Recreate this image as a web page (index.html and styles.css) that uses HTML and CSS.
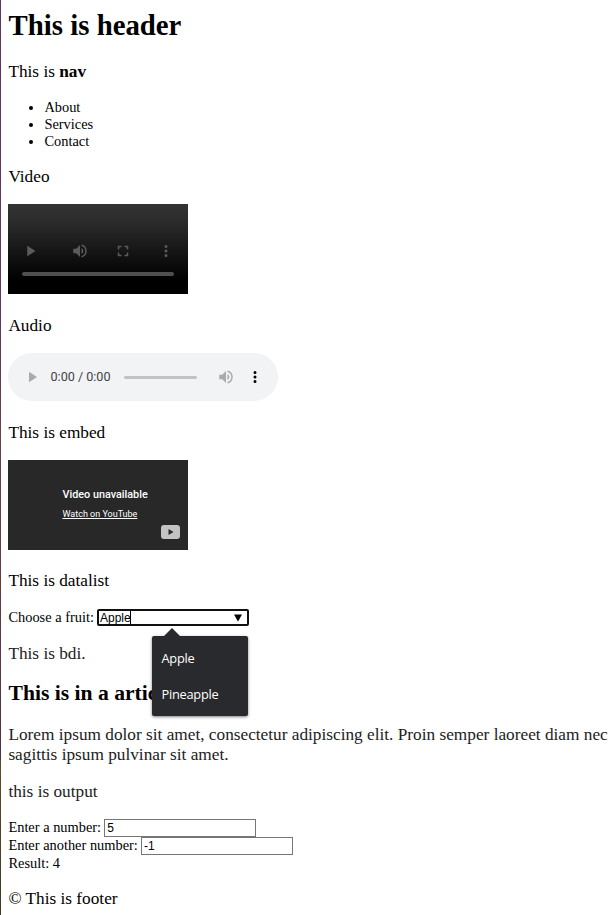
FILE: index.html
```html
<!DOCTYPE html>
<html lang="en">
<head>
<meta charset="utf-8">
<title>HTML elements</title>
<link rel="stylesheet" href="styles.css">
</head>
<body>
<header><h1>This is header</h1></header>
<nav>
  <p>This is <b>nav</b></p>
  <ul><li>About</li><li>Services</li><li>Contact</li></ul>
</nav>
<p>Video</p>
<div class="video">
  <div class="video-buttons">
    <svg width="18" height="18" viewBox="0 0 24 24"><path d="M7 5v14l11-7z"/></svg>
    <svg width="18" height="18" viewBox="0 0 24 24"><path d="M3 9v6h4l5 5V4L7 9H3zm13.500 3A4.500 4.500 0 0 0 14 7.970v8.050A4.500 4.500 0 0 0 16.500 12zM14 3.230v2.060a7 7 0 0 1 0 13.420v2.060a9 9 0 0 0 0-17.540z"/></svg>
    <svg width="18" height="18" viewBox="0 0 24 24"><path d="M7 14H5v5h5v-2H7v-3zm-2-4h2V7h3V5H5v5zm12 7h-3v2h5v-5h-2v3zM14 5v2h3v3h2V5h-5z"/></svg>
    <svg width="18" height="18" viewBox="0 0 24 24"><path d="M12 8a2 2 0 1 0 0-4 2 2 0 0 0 0 4zm0 2a2 2 0 1 0 0 4 2 2 0 0 0 0-4zm0 6a2 2 0 1 0 0 4 2 2 0 0 0 0-4z"/></svg>
  </div>
  <div class="video-track"></div>
</div>
<p>Audio</p>
<div class="audio">
  <svg class="audio-play" width="16" height="16" viewBox="0 0 24 24"><path d="M6 4v16l12-8z"/></svg>
  <span class="time">0:00 / 0:00</span>
  <span class="audio-track"></span>
  <svg class="audio-volume" width="18" height="18" viewBox="0 0 24 24"><path d="M3 9v6h4l5 5V4L7 9H3zm13.500 3A4.500 4.500 0 0 0 14 7.970v8.050A4.500 4.500 0 0 0 16.500 12zM14 3.230v2.060a7 7 0 0 1 0 13.420v2.060a9 9 0 0 0 0-17.540z"/></svg>
  <svg class="audio-more" width="18" height="18" viewBox="0 0 24 24"><path d="M12 8a2 2 0 1 0 0-4 2 2 0 0 0 0 4zm0 2a2 2 0 1 0 0 4 2 2 0 0 0 0-4zm0 6a2 2 0 1 0 0 4 2 2 0 0 0 0-4z"/></svg>
</div>
<p>This is embed</p>
<div class="embed">
  <div class="embed-title">Video unavailable</div>
  <div class="embed-link">Watch on YouTube</div>
  <svg class="embed-logo" width="19" height="14" viewBox="0 0 19 14"><rect width="19" height="14" rx="3" fill="#c3c3c3"/><path d="M7.500 4v6l5-3z" fill="#282828"/></svg>
</div>
<p>This is datalist</p>
<div class="row fruit">
  <span>Choose a fruit:</span>
  <div class="field combo"><span>Apple</span><i class="caret"></i>
    <svg class="arrow" width="8" height="8" viewBox="0 0 8 8"><path d="M0 .5h8L4 7.500z"/></svg>
    <div class="options"><div>Apple</div><div>Pineapple</div></div>
  </div>
</div>
<p class="soft">This is bdi.</p>
<article>
  <h2>This is in a article</h2>
  <p class="soft">Lorem ipsum dolor sit amet, consectetur adipiscing elit. Proin semper laoreet diam nec sagittis ipsum pulvinar sit amet.</p>
</article>
<p class="soft">this is output</p>
<div class="row"><span>Enter a number:</span><div class="field">5</div></div>
<div class="row"><span>Enter another number:</span><div class="field">-1</div></div>
<div class="row">Result: 4</div>
<footer><p>© This is footer</p></footer>
</body>
</html>
```
FILE: styles.css
```css
* { box-sizing: border-box; }
html {
  background: linear-gradient(#60345f 0, #5f3560 300px, #6b4048 430px, #653a40 600px, #503044 759px, #634928 762px, #3e3a28 915px) 0 0 / 1px 915px no-repeat #fff;
}
body {
  margin: 0;
  padding: 8px 0 0 8px;
  width: 610px;
  height: 915px;
  overflow: hidden;
  color: #000;
  font: 14.4px/17px "Liberation Serif", serif;
}
h1 { margin: 0 0 20px; padding-left: .6px; font-size: 28.800px; line-height: 34px; }
h2 { margin: 17px 0 19px; padding-left: .6px; font-size: 21.600px; line-height: 25px; }
p { margin: 0; padding-left: .4px; font-size: 17.28px; line-height: 20px; }
ul { margin: 17px 0; padding-left: 36.4px; }
li { line-height: 17px; }
.soft { color: #222; }

.video {
  display: flex;
  flex-direction: column;
  justify-content: flex-end;
  width: 180px;
  height: 90px;
  margin: 17px 0 22px;
  padding: 0 14px 18px;
  background: linear-gradient(#333, #2b2b2b 20%, #000 85%);
}
.video-buttons {
  display: flex;
  align-items: center;
  gap: 25px;
  height: 18px;
  margin-bottom: 12px;
  fill: #5b5b5b;
}
.video-buttons svg { flex: none; }
.video-buttons svg:first-child { margin-right: 6px; }
.video-track { height: 4px; border-radius: 2px; background: #505050; }

.audio {
  display: flex;
  align-items: center;
  width: 270px;
  height: 48px;
  margin: 17px 0 22px;
  padding-left: 17px;
  border-radius: 24px;
  background: #f1f3f4;
}
.audio-play, .audio-volume { fill: #a9aaab; }
.time { width: 60px; margin: 0 13px 0 9.5px; color: #444; font: 12.600px/16px Roboto, sans-serif; white-space: nowrap; }
.audio-track { width: 73px; height: 3px; margin-right: 20.5px; border-radius: 2px; background: #c1c2c3; }
.audio-more { margin-left: 11px; }

.embed {
  position: relative;
  width: 180px;
  height: 90px;
  margin: 17px 0 21px;
  padding: 28px 0 0 54.500px;
  background: #282828;
  color: #fff;
  font-family: Roboto, sans-serif;
}
.embed-title { font-size: 10.800px; line-height: 14px; font-weight: 500; }
.embed-link { margin-top: 5px; font-size: 9px; line-height: 14px; text-decoration: underline; }
.embed-logo { position: absolute; right: 8px; bottom: 11px; }

.row { display: flex; height: 18px; gap: 3px; padding-left: .4px; line-height: 17px; white-space: nowrap; }
.fruit { margin: 18px 0 18px; height: 17px; gap: 2.600px; }
.field {
  display: flex;
  align-items: center;
  width: 152px;
  height: 18px;
  padding: 0 2px;
  border: 1px solid #767676;
  font: 12px/14px "Liberation Sans", sans-serif;
}
.combo { position: relative; height: 17px; padding-left: 1.5px; border: 2px solid #101010; border-radius: 2px; }
.caret { width: 1px; height: 13px; margin-left: -.5px; background: #000; }
.arrow { margin-left: auto; margin-right: 3px; }
.options {
  position: absolute;
  top: 25px;
  left: 53px;
  width: 96px;
  height: 80px;
  padding: 4px 10px;
  border-radius: 2px;
  background: #292a2d;
  box-shadow: 0 1px 3px rgba(0, 0, 0, .5);
  color: #fff;
  font: 12.800px/36px "Open Sans", sans-serif;
  letter-spacing: -.25px;
}
.options::before {
  content: "";
  position: absolute;
  top: -8px;
  left: 12px;
  border: solid transparent;
  border-width: 0 8px 8px;
  border-bottom-color: #292a2d;
}
article { margin-bottom: 17px; }
.row:not(.fruit) span { margin-right: .1px; }
.soft + .row { margin-top: 17px; }
footer { margin-top: 16px; }
```
